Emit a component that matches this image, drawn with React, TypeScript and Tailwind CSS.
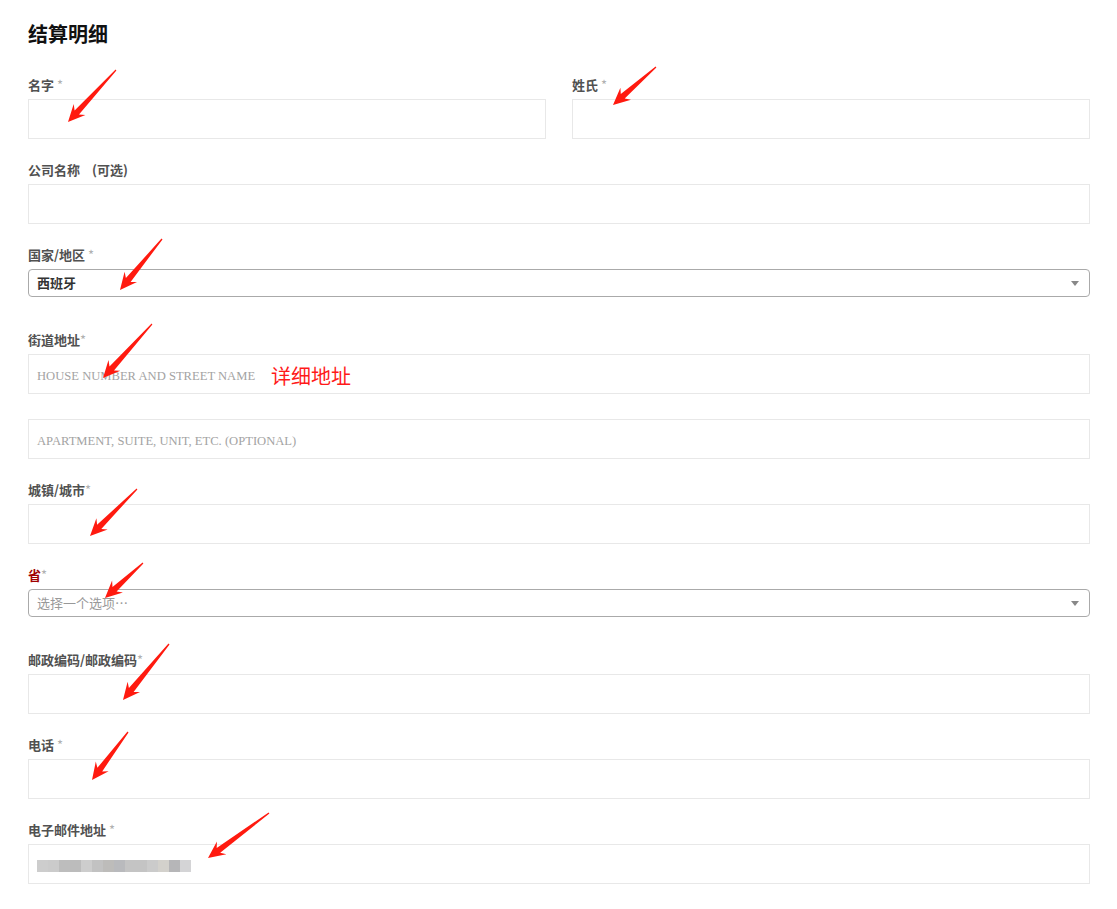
const LABEL_FONT = { fontFamily: '"Noto Sans CJK SC", "Liberation Sans", sans-serif' };

type ArrowSpec = { tx: number; ty: number; hx: number; hy: number };

const ARROWS: ArrowSpec[] = [
  { tx: 116, ty: 70, hx: 68, hy: 122 },
  { tx: 656, ty: 67, hx: 613, hy: 105 },
  { tx: 162, ty: 239, hx: 120, hy: 290 },
  { tx: 152, ty: 324, hx: 103, hy: 378 },
  { tx: 137, ty: 489, hx: 90, hy: 536 },
  { tx: 143, ty: 563, hx: 105, hy: 598 },
  { tx: 169, ty: 644, hx: 123, hy: 700 },
  { tx: 128, ty: 732, hx: 92, hy: 780 },
  { tx: 269, ty: 813, hx: 208, hy: 858 },
];

const BLUR = ["#cdcdcd", "#cbcbcb", "#bdbdbd", "#bcbcbc", "#cdcdcd", "#c2c2c2", "#bdbcba", "#b9babd", "#c4c4c4", "#c4c4c4", "#cbcbcb", "#d3d1cc", "#b6b6b8", "#d4d4d6"];

function arrowPoints({ tx, ty, hx, hy }: ArrowSpec): string {
  const len = Math.hypot(hx - tx, hy - ty);
  const dx = (hx - tx) / len;
  const dy = (hy - ty) / len;
  const nx = -dy;
  const ny = dx;
  const head = 17;
  const bx = hx - dx * head;
  const by = hy - dy * head;
  const cx = hx - dx * (head - 4);
  const cy = hy - dy * (head - 4);
  const p = (x: number, y: number) => `${x.toFixed(1)},${y.toFixed(1)}`;
  return [
    p(tx + nx * 0.6, ty + ny * 0.6),
    p(cx + nx * 3, cy + ny * 3),
    p(bx + nx * 8, by + ny * 8),
    p(hx, hy),
    p(bx - nx * 8, by - ny * 8),
    p(cx - nx * 3, cy - ny * 3),
    p(tx - nx * 0.6, ty - ny * 0.6),
  ].join(" ");
}

function Label({ text, note, star = " *", red = false }: { text: string; note?: string; star?: string; red?: boolean }) {
  return (
    <div className={`h-5 text-[13px] leading-5 font-semibold ${red ? "text-[#a00000]" : "text-[#515151]"}`} style={LABEL_FONT}>
      {text}
      {note && <span className="ml-3">{note}</span>}
      <span className="font-normal text-[#b0b0b0]">{star}</span>
    </div>
  );
}

function TextBox({ placeholder, children }: { placeholder?: string; children?: React.ReactNode }) {
  return (
    <div className="flex h-10 items-center border border-[#e8e8e8] bg-white px-2 pt-1">
      {placeholder && (
        <span className="text-[12.6px] uppercase text-[#a3a3a3]" style={{ fontFamily: '"Liberation Serif", serif' }}>
          {placeholder}
        </span>
      )}
      {children}
    </div>
  );
}

function SelectBox({ value, muted = false }: { value: string; muted?: boolean }) {
  return (
    <div className="h-10">
      <div className="flex h-7 items-center justify-between rounded-[4px] border border-[#aaaaaa] bg-white pl-2 pr-2.5">
        <span className={`text-[13px] ${muted ? "text-[#999999]" : "font-semibold text-[#333333]"}`} style={LABEL_FONT}>
          {value}
        </span>
        <span className="h-0 w-0 border-x-4 border-t-[5px] border-x-transparent border-t-[#888888]" />
      </div>
    </div>
  );
}

function Field({ label, note, star, red, children }: { label: string; note?: string; star?: string; red?: boolean; children: React.ReactNode }) {
  return (
    <div className="flex flex-col gap-1">
      <Label text={label} note={note} star={star} red={red} />
      {children}
    </div>
  );
}

export default function App() {
  return (
    <div className="relative min-h-[909px] w-[1117px] bg-white pl-7 pr-[27px] pt-[22px]">
      <h3 className="h-6 text-xl leading-6 font-bold text-[#111111]" style={LABEL_FONT}>
        结算明细
      </h3>
      <div className="mt-[29px] flex flex-col gap-[21px]">
        <div className="grid grid-cols-2 gap-[26px]">
          <Field label="名字">
            <TextBox />
          </Field>
          <Field label="姓氏">
            <TextBox />
          </Field>
        </div>
        <Field label="公司名称" note="(可选)" star="">
          <TextBox />
        </Field>
        <Field label="国家/地区">
          <SelectBox value="西班牙" />
        </Field>
        <div className="flex flex-col gap-[25px]">
          <Field label="街道地址" star="*">
            <TextBox placeholder="House number and street name">
              <span className="ml-4 text-xl text-[#ff1a1a]" style={LABEL_FONT}>
                详细地址
              </span>
            </TextBox>
          </Field>
          <TextBox placeholder="Apartment, suite, unit, etc. (optional)" />
        </div>
        <Field label="城镇/城市" star="*">
          <TextBox />
        </Field>
        <Field label="省" star="*" red>
          <SelectBox value="选择一个选项…" muted />
        </Field>
        <Field label="邮政编码/邮政编码" star="*">
          <TextBox />
        </Field>
        <Field label="电话">
          <TextBox />
        </Field>
        <Field label="电子邮件地址">
          <div className="flex h-10 items-center border border-[#e8e8e8] bg-white pl-2 pt-1">
            <div className="flex h-3 rounded-sm shadow-[0_0_6px_4px_#ffffff]">
              {BLUR.map((c, i) => (
                <div key={i} className="h-3 w-[11px]" style={{ backgroundColor: c }} />
              ))}
            </div>
          </div>
        </Field>
      </div>
      <svg className="pointer-events-none absolute left-0 top-0" width="1117" height="909">
        {ARROWS.map((a, i) => (
          <polygon key={i} points={arrowPoints(a)} fill="#ff1a0f" />
        ))}
      </svg>
    </div>
  );
}
